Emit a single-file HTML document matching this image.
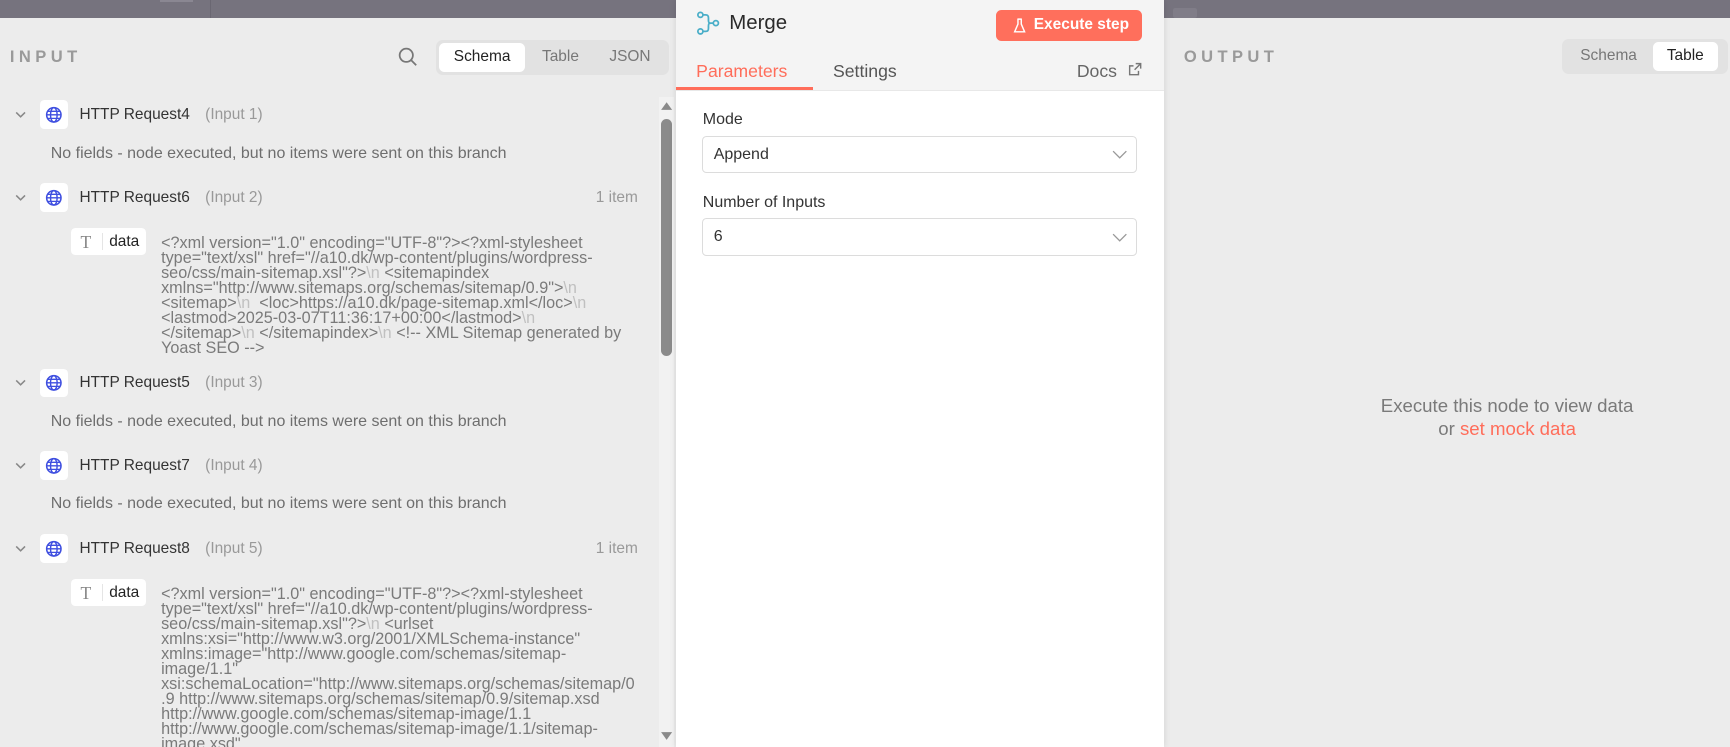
<!DOCTYPE html>
<html><head><meta charset="utf-8">
<style>
html,body{margin:0;padding:0;}
body{width:1730px;height:747px;overflow:hidden;background:#ececec;font-family:"Liberation Sans",Arial,sans-serif;}
#root{zoom:1.1033;width:1568px;height:677px;position:relative;overflow:hidden;}
.a{position:absolute;}
.top{left:0;top:0;width:1568px;height:16px;background:#76737e;}
.label{font-size:15px;font-weight:bold;letter-spacing:4px;color:#9a9a9a;}
.tog{background:#e2e2e2;border-radius:6px;height:32px;}
.tb{position:absolute;top:3px;height:26px;line-height:26px;font-size:14px;color:#777;text-align:center;border-radius:5px;}
.tb.on{background:#fff;color:#222;}
.row{font-size:14px;color:#333;white-space:nowrap;}
.muted{color:#999;}
.ib{width:26px;height:26px;background:#fff;border-radius:4px;}
.nf{font-size:14.5px;color:#6e6e6e;white-space:nowrap;}
.xml{font-size:14.7px;color:#7a7a7a;line-height:13.6px;white-space:nowrap;}
.xml i{font-style:normal;color:#c0c0c0;}
.pill{width:68px;height:24px;background:#fff;border-radius:4px;}
.sel{background:#fff;border:1px solid #dcdcdc;border-radius:4px;height:32px;width:395px;font-size:14.5px;color:#333;line-height:32px;box-sizing:border-box;padding-left:10px;}
</style></head><body><div id="root">
<div class="a top"></div>
<div class="a" style="left:190px;top:0;width:1px;height:16px;background:#6a6772"></div>
<div class="a" style="left:145px;top:0;width:30px;height:2px;background:#8a8792"></div>

<div class="a label" style="left:9px;top:43px;">INPUT</div>
<svg class="a" style="left:361px;top:43px" width="18" height="18" viewBox="0 0 18 18"><circle cx="7.5" cy="7.5" r="6" fill="none" stroke="#777" stroke-width="1.6"/><path d="M12 12l4.5 4.5" stroke="#777" stroke-width="1.6"/></svg>
<div class="a tog" style="left:395px;top:36px;width:211px;">
 <div class="tb on" style="left:3px;width:78px;">Schema</div>
 <div class="tb" style="left:81px;width:64px;">Table</div>
 <div class="tb" style="left:145px;width:62px;">JSON</div>
</div>

<div class="a" style="left:597px;top:88px;width:14px;height:589px;background:#f2f2f2"></div>
<svg class="a" style="left:598px;top:91px" width="12" height="10"><path d="M1 9L6 2L11 9Z" fill="#8a8a8a"/></svg>
<svg class="a" style="left:598px;top:663px" width="12" height="10"><path d="M1 1L6 8L11 1Z" fill="#8a8a8a"/></svg>
<div class="a" style="left:599px;top:108px;width:10px;height:215px;background:#8b8b8b;border-radius:5px"></div>

<svg width="0" height="0" style="position:absolute"><defs>
<g id="glb"><circle cx="8" cy="8" r="6.5" fill="none" stroke="#3f4fe0" stroke-width="1.4"/><ellipse cx="8" cy="8" rx="3" ry="6.5" fill="none" stroke="#3f4fe0" stroke-width="1.3"/><path d="M1.5 8h13M2.5 4.8h11M2.5 11.2h11" stroke="#3f4fe0" stroke-width="1.2"/></g>
<g id="chv"><path d="M2 4l4 4 4-4" fill="none" stroke="#888" stroke-width="1.4"/></g>
</defs></svg>

<div class="a" style="left:0;top:91px">
 <svg class="a" style="left:13px;top:7px" width="12" height="12"><use href="#chv"/></svg>
 <div class="a ib" style="left:36px;top:0"><svg style="margin:5px" width="16" height="16"><use href="#glb"/></svg></div>
 <div class="a row" style="left:72px;top:5px">HTTP Request4 <span class="muted" style="margin-left:10px">(Input 1)</span></div>
</div>
<div class="a nf" style="left:46px;top:131px">No fields - node executed, but no items were sent on this branch</div>

<div class="a" style="left:0;top:166px">
 <svg class="a" style="left:13px;top:7px" width="12" height="12"><use href="#chv"/></svg>
 <div class="a ib" style="left:36px;top:0"><svg style="margin:5px" width="16" height="16"><use href="#glb"/></svg></div>
 <div class="a row" style="left:72px;top:5px">HTTP Request6 <span class="muted" style="margin-left:10px">(Input 2)</span></div>
 <div class="a row muted" style="left:540px;top:5px">1 item</div>
</div>
<div class="a pill" style="left:64px;top:207px">
 <span class="a" style="left:9px;top:3px;font-family:'Liberation Serif',serif;font-size:16px;color:#888">T</span>
 <span class="a" style="left:28px;top:4px;width:1px;height:16px;background:#e5e5e5"></span>
 <span class="a" style="left:35px;top:4px;font-size:14px;color:#222">data</span>
</div>
<div class="a xml" style="left:146px;top:214px">&lt;?xml version="1.0" encoding="UTF-8"?&gt;&lt;?xml-stylesheet<br>type="text/xsl" href="//a10.dk/wp-content/plugins/wordpress-<br>seo/css/main-sitemap.xsl"?&gt;<i>\n</i> &lt;sitemapindex<br>xmlns="http://www.sitemaps.org/schemas/sitemap/0.9"&gt;<i>\n</i><br>&lt;sitemap&gt;<i>\n</i> &nbsp;&lt;loc&gt;https://a10.dk/page-sitemap.xml&lt;/loc&gt;<i>\n</i><br>&lt;lastmod&gt;2025-03-07T11:36:17+00:00&lt;/lastmod&gt;<i>\n</i><br>&lt;/sitemap&gt;<i>\n</i> &lt;/sitemapindex&gt;<i>\n</i> &lt;!-- XML Sitemap generated by<br>Yoast SEO --&gt;</div>

<div class="a" style="left:0;top:334px">
 <svg class="a" style="left:13px;top:7px" width="12" height="12"><use href="#chv"/></svg>
 <div class="a ib" style="left:36px;top:0"><svg style="margin:5px" width="16" height="16"><use href="#glb"/></svg></div>
 <div class="a row" style="left:72px;top:5px">HTTP Request5 <span class="muted" style="margin-left:10px">(Input 3)</span></div>
</div>
<div class="a nf" style="left:46px;top:374px">No fields - node executed, but no items were sent on this branch</div>

<div class="a" style="left:0;top:409px">
 <svg class="a" style="left:13px;top:7px" width="12" height="12"><use href="#chv"/></svg>
 <div class="a ib" style="left:36px;top:0"><svg style="margin:5px" width="16" height="16"><use href="#glb"/></svg></div>
 <div class="a row" style="left:72px;top:5px">HTTP Request7 <span class="muted" style="margin-left:10px">(Input 4)</span></div>
</div>
<div class="a nf" style="left:46px;top:449px">No fields - node executed, but no items were sent on this branch</div>

<div class="a" style="left:0;top:484px">
 <svg class="a" style="left:13px;top:7px" width="12" height="12"><use href="#chv"/></svg>
 <div class="a ib" style="left:36px;top:0"><svg style="margin:5px" width="16" height="16"><use href="#glb"/></svg></div>
 <div class="a row" style="left:72px;top:5px">HTTP Request8 <span class="muted" style="margin-left:10px">(Input 5)</span></div>
 <div class="a row muted" style="left:540px;top:5px">1 item</div>
</div>
<div class="a pill" style="left:64px;top:525px">
 <span class="a" style="left:9px;top:3px;font-family:'Liberation Serif',serif;font-size:16px;color:#888">T</span>
 <span class="a" style="left:28px;top:4px;width:1px;height:16px;background:#e5e5e5"></span>
 <span class="a" style="left:35px;top:4px;font-size:14px;color:#222">data</span>
</div>
<div class="a xml" style="left:146px;top:532px">&lt;?xml version="1.0" encoding="UTF-8"?&gt;&lt;?xml-stylesheet<br>type="text/xsl" href="//a10.dk/wp-content/plugins/wordpress-<br>seo/css/main-sitemap.xsl"?&gt;<i>\n</i> &lt;urlset<br>xmlns:xsi="http://www.w3.org/2001/XMLSchema-instance"<br>xmlns:image="http://www.google.com/schemas/sitemap-<br>image/1.1"<br>xsi:schemaLocation="http://www.sitemaps.org/schemas/sitemap/0<br>.9 http://www.sitemaps.org/schemas/sitemap/0.9/sitemap.xsd<br>http://www.google.com/schemas/sitemap-image/1.1<br>http://www.google.com/schemas/sitemap-image/1.1/sitemap-<br>image.xsd"</div>

<!-- CENTER -->
<div class="a" style="left:613px;top:0;width:442px;height:677px;background:#fff;box-shadow:0 0 6px rgba(0,0,0,.12)"></div>
<div class="a" style="left:613px;top:0;width:442px;height:82px;background:#f4f4f4;border-bottom:1px solid #e8e8e8"></div>
<div class="a" style="left:1063px;top:7px;width:22px;height:9px;background:#807d88;border-radius:2px"></div>
<svg class="a" style="left:631px;top:10px" width="22" height="22" viewBox="0 0 22 22"><g fill="none" stroke="#4aaec8" stroke-width="1.6"><circle cx="4" cy="3.5" r="2.3"/><circle cx="4" cy="18.5" r="2.3"/><circle cx="18" cy="11" r="2.3"/><path d="M6.3 3.5h2.5c2 0 2.5 1 2.5 3v2c0 2 .5 2.5 2.5 2.5h1.9M6.3 18.5h2.5c2 0 2.5-1 2.5-3v-2c0-2 .5-2.5 2.5-2.5"/></g></svg>
<div class="a" style="left:661px;top:11px;font-size:18.5px;color:#2a2a2a">Merge</div>
<div class="a" style="left:903px;top:9px;width:132px;height:28px;background:#ff6f5c;border-radius:5px;color:#fff;font-size:14px;font-weight:bold;line-height:28px">
 <svg class="a" style="left:15px;top:7px" width="12" height="14" viewBox="0 0 12 14"><path d="M4 1h4M4.5 1v4.5L1.5 12.5h9L7.5 5.5V1" fill="none" stroke="#fff" stroke-width="1.3"/></svg>
 <span class="a" style="left:34px;top:0">Execute step</span>
</div>
<div class="a" style="left:631px;top:55px;font-size:16px;color:#ff6d5a">Parameters</div>
<div class="a" style="left:613px;top:79px;width:124px;height:3px;background:#ff6d5a"></div>
<div class="a" style="left:755px;top:55px;font-size:16px;color:#555">Settings</div>
<div class="a" style="left:976px;top:55px;font-size:16px;color:#666">Docs</div>
<svg class="a" style="left:1022px;top:56px" width="13" height="13" viewBox="0 0 13 13"><path d="M7 1.5h4.5V6M11.5 1.5L6 7M9.5 8v3.5h-8v-8H5" fill="none" stroke="#777" stroke-width="1.3"/></svg>
<div class="a" style="left:637px;top:101px;font-size:14.5px;color:#333">Mode</div>
<div class="a sel" style="left:636px;top:123px;height:34px;line-height:33px">Append</div>
<svg class="a" style="left:1008px;top:135px" width="14" height="10"><path d="M1 2l6 6 6-6" fill="none" stroke="#999" stroke-width="1.2"/></svg>
<div class="a" style="left:637px;top:176px;font-size:14.5px;color:#333">Number of Inputs</div>
<div class="a sel" style="left:636px;top:198px;height:34px;line-height:33px">6</div>
<svg class="a" style="left:1008px;top:210px" width="14" height="10"><path d="M1 2l6 6 6-6" fill="none" stroke="#999" stroke-width="1.2"/></svg>

<!-- OUTPUT -->
<div class="a label" style="left:1073px;top:43px;">OUTPUT</div>
<div class="a tog" style="left:1416px;top:35px;width:150px;">
 <div class="tb" style="left:3px;width:78px;">Schema</div>
 <div class="tb on" style="left:82px;width:59px;">Table</div>
</div>
<div class="a" style="left:1166px;top:357px;width:400px;text-align:center;font-size:16.9px;color:#7a7a7a;line-height:21px">Execute this node to view data<br>or <span style="color:#ff6d5a">set mock data</span></div>
</div></body></html>
